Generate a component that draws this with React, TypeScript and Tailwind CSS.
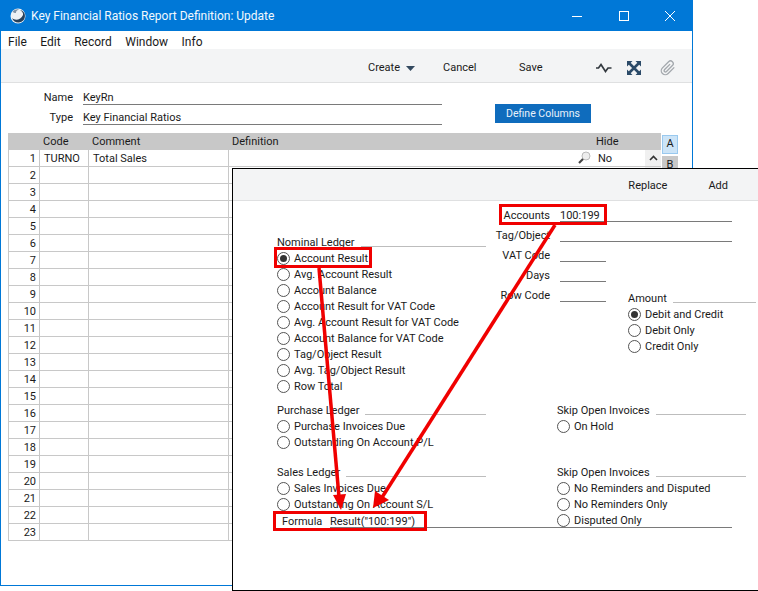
const Font = "[font-family:Roboto,sans-serif]";

function Radio({ checked }: { checked?: boolean }) {
  return (
    <span className="flex h-[13px] w-[13px] shrink-0 items-center justify-center rounded-full border border-[#555] bg-white">
      {checked && <span className="h-[7px] w-[7px] rounded-full bg-[#333]" />}
    </span>
  );
}

function RadioRow({ label, checked }: { label: string; checked?: boolean }) {
  return (
    <div className="flex h-4 items-center gap-[4px] whitespace-nowrap leading-4">
      <Radio checked={checked} />
      <span className="mt-[2px]">{label}</span>
    </div>
  );
}

function Group({ title, items, className, checkedIndex }: { title: string; items: string[]; className?: string; checkedIndex?: number }) {
  return (
    <div className={className}>
      <div className="flex h-4 items-end gap-[6px] whitespace-nowrap">
        <span className="leading-[14px]">{title}</span>
        <span className="mb-[3px] h-px flex-1 bg-[#bdbdbd]" />
      </div>
      {items.map((it, i) => (
        <RadioRow key={it} label={it} checked={i === checkedIndex} />
      ))}
    </div>
  );
}

function Field({ label, className, value }: { label: string; className: string; value?: string }) {
  return (
    <div className="flex h-5 items-start gap-[10px] whitespace-nowrap">
      <span className="w-[64px] text-right leading-[22px]">{label}</span>
      <span className={`h-[17px] border-b border-[#7a7a7a] leading-[22px] ${className}`}>{value}</span>
    </div>
  );
}

function RedBox({ className }: { className: string }) {
  return <div className={`pointer-events-none absolute z-10 border-[3px] border-[#f00000] ${className}`} />;
}

export default function App() {
  const rows = Array.from({ length: 23 }, (_, i) => i + 1);
  return (
    <div className={`relative h-[591px] w-[758px] overflow-hidden bg-white text-[11px] text-[#1a1a1a] ${Font}`}>
      {/* Main window */}
      <div className="flex h-[586px] w-[693px] flex-col border border-t-0 border-[#0078d7] bg-white">
        <div className="flex h-[31px] shrink-0 items-center bg-[#0078d7] pl-[9px] text-[12px] text-[#f2f8fd]">
          <svg width="16" height="16" viewBox="0 0 16 16" className="mr-[5px]">
            <circle cx="8" cy="8" r="7.5" fill="#eef1f4" />
            <path d="M2 10 C5 13 11 12 13 7 C13.5 5 12 3 10 2 C15 3 16 8 14 11.5 C11 16 4 15.5 2 10Z" fill="#26405a" />
            <path d="M2.5 4 C4 1.5 7 1 9 1.5 C6.5 2.5 5.5 4 6 5 C4.5 5 3.5 4.5 2.5 4Z" fill="#7f93a6" />
          </svg>
          <span>Key Financial Ratios Report Definition: Update</span>
          <div className="ml-auto flex items-center">
            <svg width="12" height="12" viewBox="0 0 12 12" className="mr-[35px]"><path d="M1 6.5H11" stroke="#fff" /></svg>
            <svg width="12" height="12" viewBox="0 0 12 12" className="mr-[34px]"><rect x="1.5" y="1.5" width="9" height="9" fill="none" stroke="#fff" /></svg>
            <svg width="12" height="12" viewBox="0 0 12 12" className="mr-[16px]"><path d="M1 1L11 11M11 1L1 11" stroke="#fff" /></svg>
          </div>
        </div>
        <div className="flex h-[18px] shrink-0 items-center gap-[13.5px] pl-[7px] pt-[3px] text-[12px]">
          <span>File</span><span>Edit</span><span>Record</span><span>Window</span><span>Info</span>
        </div>
        <div className="flex h-[34px] shrink-0 items-center border-b border-[#dfe0e1] bg-[#f3f4f5] pt-[5px]">
          <span className="ml-[367px] w-[32px]">Create</span>
          <svg width="9" height="5" viewBox="0 0 9 5" className="ml-[6px]"><path d="M0 0H9L4.5 5Z" fill="#33495f" /></svg>
          <span className="ml-[28px] w-[33px]">Cancel</span>
          <span className="ml-[43px] w-[25px]">Save</span>
          <svg width="18" height="14" viewBox="0 0 18 14" className="ml-[51px]"><path d="M1 7H3.5L6 3.5L10.5 10.5L13 7H16.5" fill="none" stroke="#33393f" strokeWidth="1.7" /></svg>
          <svg width="14" height="14" viewBox="0 0 14 14" className="ml-[14px]">
            <path d="M2 2L12 12M12 2L2 12" stroke="#2b4a68" strokeWidth="2.6" />
            <path d="M0 0H5.5L0 5.5ZM14 0V5.5L8.5 0ZM0 14V8.5L5.5 14ZM14 14H8.5L14 8.5Z" fill="#2b4a68" />
          </svg>
          <svg width="16" height="16" viewBox="0 0 24 24" className="ml-[19px]" fill="none" stroke="#a3a8ad" strokeWidth="2"><path d="M21.4 11.1l-9.2 9.2a6 6 0 0 1-8.5-8.5l9.2-9.2a4 4 0 0 1 5.7 5.7l-9.2 9.2a2 2 0 0 1-2.8-2.8l8.5-8.5" /></svg>
        </div>

        <div className="flex min-h-0 flex-1 flex-col">
          <div className="flex h-[50px] shrink-0 pt-[5px]">
            <div className="w-[441px]">
              <div className="flex h-5 items-start">
                <span className="w-[72px] text-right leading-[20px]">Name</span>
                <span className="ml-[10px] h-[17px] flex-1 border-b border-[#7a7a7a] leading-[19px]">KeyRn</span>
              </div>
              <div className="flex h-5 items-start">
                <span className="w-[72px] text-right leading-[20px]">Type</span>
                <span className="ml-[10px] h-[17px] flex-1 border-b border-[#7a7a7a] leading-[19px]">Key Financial Ratios</span>
              </div>
            </div>
            <div className="ml-[53px] mt-[16px] flex h-[19px] w-[96px] items-center justify-center bg-[#0f6cbd] text-[10.5px] text-[#e8f1fa]">Define Columns</div>
          </div>

          <div className="flex shrink-0 pl-[7px]">
            <div className="w-[653px]">
              <div className="flex h-[17px] bg-[#c8c8c8] leading-[17px]">
                <span className="ml-[35px] w-[49px]">Code</span>
                <span className="w-[140px]">Comment</span>
                <span className="w-[364px]">Definition</span>
                <span>Hide</span>
              </div>
              {rows.map((n) => (
                <div key={n} className="flex h-[17px] border-b border-[#c8c8c8] leading-[18px]">
                  <span className="w-[32px] border-x border-[#c8c8c8] pr-[3px] text-right">{n}</span>
                  <span className="w-[49px] border-r border-[#c8c8c8] pl-[4px]">{n === 1 ? "TURNO" : ""}</span>
                  <span className="w-[140px] border-r border-[#c8c8c8] pl-[4px]">{n === 1 ? "Total Sales" : ""}</span>
                  <span className="relative w-[364px]">
                    {n === 1 && (
                      <svg width="14" height="14" viewBox="0 0 14 14" className="absolute right-[2px] top-[1px]">
                        <circle cx="9" cy="5" r="4" fill="#eee" stroke="#bbb" />
                        <path d="M6 8L2 12" stroke="#444" strokeWidth="2.2" />
                      </svg>
                    )}
                  </span>
                  <span className="w-[52px] pl-[5px]">{n === 1 ? "No" : ""}</span>
                  <span className="flex w-[16px] items-center justify-center bg-[#f0f0f0]">
                    {n === 1 && <svg width="9" height="6" viewBox="0 0 9 6"><path d="M1 5L4.5 1.5L8 5" fill="none" stroke="#333" strokeWidth="1.6" /></svg>}
                  </span>
                </div>
              ))}
            </div>
            <div className="ml-px flex flex-col gap-[2px] pt-[2px]">
              <div className="flex h-[19px] w-[16px] items-center justify-center border border-[#99c9ef] bg-[#cce4f7]">A</div>
              <div className="flex h-[19px] w-[16px] items-center justify-center bg-[#c8c8c8]">B</div>
            </div>
          </div>
        </div>
      </div>

      {/* Overlaid window */}
      <div className="absolute left-[232px] top-[168px] flex h-[423px] w-[527px] flex-col border border-black bg-white">
        <div className="flex h-[32px] shrink-0 items-center justify-end border-b border-[#dfe0e1] bg-[#f3f4f5] pt-[3px]">
          <span className="mr-[41px]">Replace</span>
          <span className="mr-[30px]">Add</span>
        </div>
        <div className="flex pl-[44px] pt-[4px]">
          <div className="w-[209px] pt-[29px]">
            <Group
              title="Nominal Ledger"
              checkedIndex={0}
              items={["Account Result", "Avg. Account Result", "Account Balance", "Account Result for VAT Code", "Avg. Account Result for VAT Code", "Account Balance for VAT Code", "Tag/Object Result", "Avg. Tag/Object Result", "Row Total"]}
            />
            <Group className="mt-[8px]" title="Purchase Ledger" items={["Purchase Invoices Due", "Outstanding On Account P/L"]} />
            <Group className="mt-[14px]" title="Sales Ledger" items={["Sales Invoices Due", "Outstanding On Account S/L"]} />
            <div className="mt-[2px] flex h-[14px] w-[455px] items-start leading-4">
              <span className="ml-[5px] w-[48px]">Formula</span>
              <span className="h-[14px] flex-1 border-b border-[#7a7a7a]">Result("100:199")</span>
            </div>
          </div>
          <div>
            <div className="w-[246px]">
              <Field label="Accounts" className="w-[172px]" value="100:199" />
              <Field label="Tag/Object" className="w-[172px]" />
            </div>
            <div className="flex">
              <div>
                <Field label="VAT Code" className="w-[46px]" />
                <Field label="Days" className="w-[46px]" />
                <Field label="Row Code" className="w-[46px]" />
              </div>
              <Group
                className="ml-[22px] mt-[45px] w-[128px]"
                title="Amount"
                checkedIndex={0}
                items={["Debit and Credit", "Debit Only", "Credit Only"]}
              />
            </div>
            <Group className="ml-[71px] mt-[48px] w-[189px]" title="Skip Open Invoices" items={["On Hold"]} />
            <Group className="ml-[71px] mt-[30px] w-[189px]" title="Skip Open Invoices" items={["No Reminders and Disputed", "No Reminders Only", "Disputed Only"]} />
          </div>
        </div>
      </div>

      {/* Annotations */}
      <RedBox className="left-[274px] top-[247px] h-[21px] w-[98px]" />
      <RedBox className="left-[499px] top-[204px] h-[21px] w-[108px]" />
      <RedBox className="left-[273px] top-[511px] h-[20px] w-[154px]" />
      <svg width="758" height="591" viewBox="0 0 758 591" className="pointer-events-none absolute left-0 top-0 z-10">
        <path d="M319 268L339 497" stroke="#f00000" strokeWidth="3.5" fill="none" />
        <path d="M341 510L333 495L346 494Z" fill="#f00000" />
        <path d="M555 225L381 499" stroke="#f00000" strokeWidth="3.5" fill="none" />
        <path d="M373 508L375 491L389 500Z" fill="#f00000" />
      </svg>
    </div>
  );
}
